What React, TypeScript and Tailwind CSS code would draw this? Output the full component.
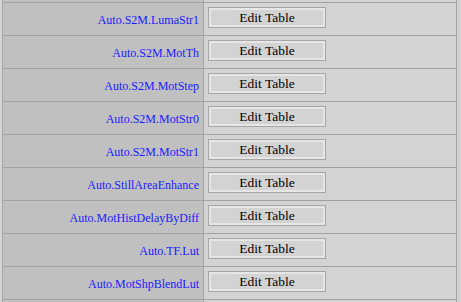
import React from "react";

const names = [
  "Auto.S2M.LumaStr1",
  "Auto.S2M.MotTh",
  "Auto.S2M.MotStep",
  "Auto.S2M.MotStr0",
  "Auto.S2M.MotStr1",
  "Auto.StillAreaEnhance",
  "Auto.MotHistDelayByDiff",
  "Auto.TF.Lut",
  "Auto.MotShpBlendLut",
];

function Stub({ top }: { top?: boolean }) {
  return (
    <div className={`flex h-[2px] box-content ${top ? "border-t border-[#a3a3a3]" : ""}`}>
      <div className="w-[201px] bg-[#c0c0c0] border-r border-[#a3a3a3]" />
      <div className="w-[252px] bg-[#d3d3d3]" />
    </div>
  );
}

export default function App() {
  return (
    <div
      className="w-[461px] h-[302px] overflow-hidden bg-[#d3d3d3] pl-[2px]"
      style={{ fontFamily: '"Liberation Serif", "Times New Roman", serif' }}
    >
      <div className="w-[455px] border-x border-[#a3a3a3]">
        <Stub />
        {names.map((n) => (
          <div key={n} className="flex h-[33px] border-t border-[#a3a3a3]">
            <div className="w-[201px] bg-[#c0c0c0] border-r border-[#a3a3a3] flex items-center justify-end pr-[4px] pt-[1px] text-[12px] text-[#1a1aff]">
              {n}
            </div>
            <div className="w-[252px] bg-[#d3d3d3] pl-[4px] pt-[4px]">
              <div className="w-[118px] h-[21px] border border-[#a6a6a6] bg-[#d3d3d3] shadow-[inset_0_0_0_2px_#e6e6e6] flex items-center justify-center pt-[1px] text-[13.5px] text-black">
                Edit Table
              </div>
            </div>
          </div>
        ))}
        <Stub top />
      </div>
    </div>
  );
}
